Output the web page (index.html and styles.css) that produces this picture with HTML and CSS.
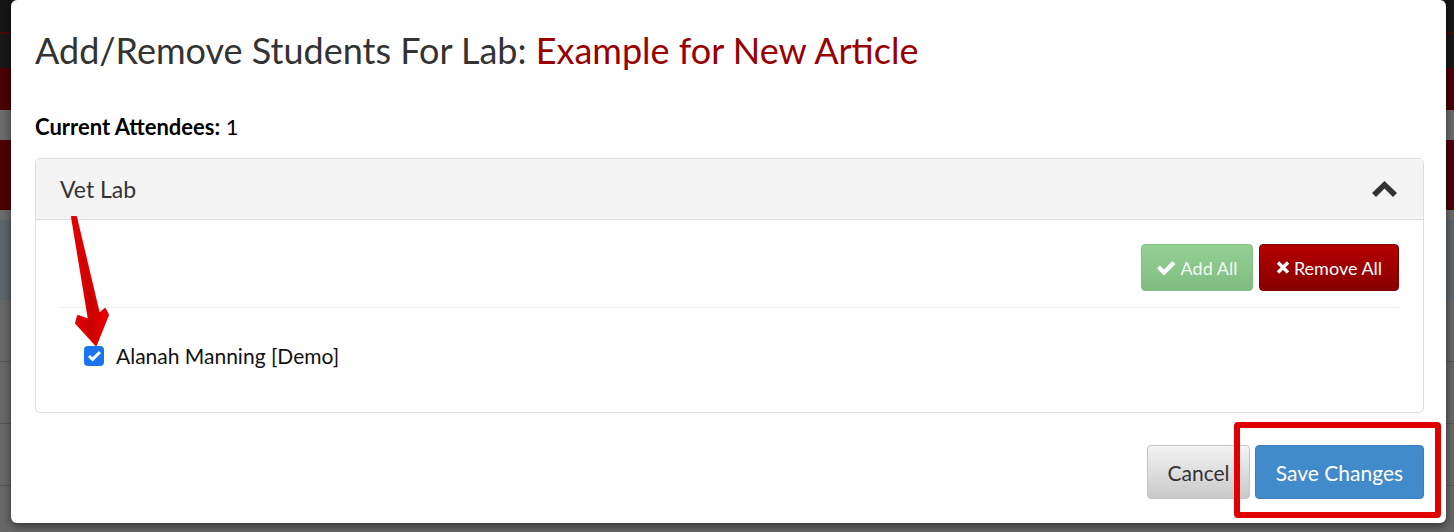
FILE: index.html
```html
<!DOCTYPE html>
<html lang="en">
<head>
<meta charset="UTF-8">
<meta name="viewport" content="width=device-width, initial-scale=1.0">
<title>Add/Remove Students</title>
<link rel="stylesheet" href="styles.css">
</head>
<body>
<!-- dimmed page behind the modal -->
<div class="page">
  <div class="topbar"></div>
  <div class="subbar"></div>
  <div class="nav"></div>
  <div class="gap"></div>
  <div class="banner"></div>
  <div class="gap thin"></div>
  <div class="info"></div>
  <div class="list-row"></div>
  <div class="list-row"></div>
  <div class="list-row"></div>
  <div class="list-row"></div>
</div>

<div class="modal">
  <div class="modal-header">
    <h4 class="modal-title">Add/Remove Students For Lab: <span class="lab-name">Example for New Article</span></h4>
  </div>
  <div class="modal-body">
    <p class="attendees"><strong>Current Attendees:</strong> 1</p>
    <div class="panel">
      <div class="panel-heading">
        <span class="panel-title">Vet Lab</span>
        <svg class="chevron" width="25" height="16" viewBox="0 0 25 16"><polygon points="0,12 12.5,0 25,12 21,16 12.5,7.5 4,16" fill="#333"/></svg>
      </div>
      <div class="panel-body">
        <div class="toolbar">
          <button class="btn btn-add">
            <svg width="20" height="14" viewBox="0 0 20 14"><polygon points="0,7.5 3,4.5 7,8.5 15.5,0 18.5,3 7,14.5" fill="#fff"/></svg>
            Add All
          </button>
          <button class="btn btn-remove">
            <svg width="14" height="13" viewBox="0 0 14 13"><path d="M2 1.5 L12 11.5 M12 1.5 L2 11.5" stroke="#fff" stroke-width="3.4"/></svg>
            Remove All
          </button>
        </div>
        <hr class="divider">
        <label class="student">
          <span class="check"><svg width="15" height="12" viewBox="0 0 15 12"><path d="M2 6 L5.6 9.4 L13 2" fill="none" stroke="#fff" stroke-width="3"/></svg></span>
          Alanah Manning [Demo]
        </label>
      </div>
    </div>
  </div>
  <div class="modal-footer">
    <button class="btn btn-cancel">Cancel</button>
    <button class="btn btn-save">Save Changes</button>
  </div>
</div>

<!-- screenshot annotations -->
<svg class="arrow" width="60" height="140" viewBox="60 212 60 140">
  <defs>
    <linearGradient id="arrowShade" x1="0" y1="0" x2="1" y2="0">
      <stop offset="0" stop-color="#e80000"/>
      <stop offset="0.5" stop-color="#c80000"/>
      <stop offset="1" stop-color="#f00000"/>
    </linearGradient>
  </defs>
  <polygon points="72,217 76,217 99,314 105,309 108,315 96,345 76,323 78,316 89,320" fill="url(#arrowShade)" stroke="#e00000" stroke-width="2" stroke-linejoin="round"/>
</svg>
<div class="highlight"></div>
</body>
</html>
```

FILE: styles.css
```css
body {
  margin: 0;
  font-family: Lato, "Open Sans", sans-serif;
  background-color: #666;
  overflow: hidden;
}
.page {
  height: 532px;
}
.topbar {
  height: 32px;
  background-color: #151515;
  border-bottom: 2px solid #4a0a0a;
}
.subbar {
  height: 34px;
  background-color: #181818;
}
.nav {
  height: 42px;
  background-color: #4a0202;
}
.gap {
  height: 30px;
  background-color: #6b6b6b;
}
.gap.thin {
  height: 10px;
}
.banner {
  height: 70px;
  background-color: #4b0303;
}
.info {
  height: 80px;
  background-color: #5b666b;
}
.list-row {
  height: 61px;
  background-color: #676767;
  border-bottom: 1px solid #555;
}

.modal {
  position: absolute;
  left: 11px;
  top: 0;
  width: 1435px;
  height: 523px;
  box-sizing: border-box;
  padding: 0 22px 0 24px;
  background-color: #fff;
  border-radius: 6px;
  box-shadow: 0 3px 9px rgba(0, 0, 0, 0.5);
}
.modal-header {
  padding-top: 30px;
}
.modal-title {
  margin: 0;
  font-size: 36px;
  line-height: 40px;
  font-weight: 400;
  color: #333;
}
.lab-name {
  color: #990000;
}
.attendees {
  margin: 44px 0 18px;
  font-size: 22px;
  line-height: 26px;
  color: #000;
}
.attendees strong {
  font-weight: 700;
}
.panel {
  border: 1px solid #ddd;
  border-radius: 5px;
}
.panel-heading {
  display: flex;
  align-items: center;
  justify-content: space-between;
  height: 60px;
  padding: 0 26px 0 24px;
  background-color: #f4f4f4;
  border-bottom: 1px solid #ddd;
  border-radius: 5px 5px 0 0;
}
.panel-title {
  font-size: 23px;
  color: #333;
}
.panel-body {
  padding: 24px 24px 44px;
}
.toolbar {
  display: flex;
  justify-content: flex-end;
  gap: 6px;
}
.btn {
  display: inline-flex;
  align-items: center;
  justify-content: center;
  gap: 4px;
  font-family: Lato, "Open Sans", sans-serif;
  border-radius: 4px;
  cursor: pointer;
}
.btn-add {
  width: 112px;
  height: 47px;
  font-size: 18px;
  color: #f3faf3;
  background: linear-gradient(#95d095, #80bb80);
  border: 1px solid #80c080;
}
.btn-remove {
  width: 140px;
  height: 47px;
  font-size: 18px;
  color: #fff;
  background: linear-gradient(#b40000, #880000);
  border: 1px solid #7a0000;
}
.divider {
  margin: 16px 0 0;
  border: 0;
  border-top: 1px solid #eee;
}
.student {
  display: flex;
  align-items: center;
  gap: 12px;
  margin: 36px 0 0 24px;
  font-size: 21px;
  line-height: 24px;
  color: #111;
}
.check {
  display: flex;
  align-items: center;
  justify-content: center;
  width: 20px;
  height: 20px;
  border-radius: 4px;
  background-color: #1a74f0;
}
.modal-footer {
  display: flex;
  justify-content: flex-end;
  gap: 5px;
  margin-top: 32px;
}
.btn-cancel {
  width: 103px;
  height: 54px;
  font-size: 21px;
  color: #333;
  background: linear-gradient(#f3f3f3, #c9c9c9);
  border: 1px solid #c4c4c4;
}
.btn-save {
  width: 169px;
  height: 54px;
  font-size: 21px;
  color: #fff;
  background-color: #428bca;
  border: 1px solid #3b80bd;
}

.arrow {
  position: absolute;
  left: 60px;
  top: 212px;
}
.highlight {
  position: absolute;
  left: 1234px;
  top: 422px;
  width: 195px;
  height: 84px;
  border: 6px solid #e00000;
  border-radius: 4px;
}
```
